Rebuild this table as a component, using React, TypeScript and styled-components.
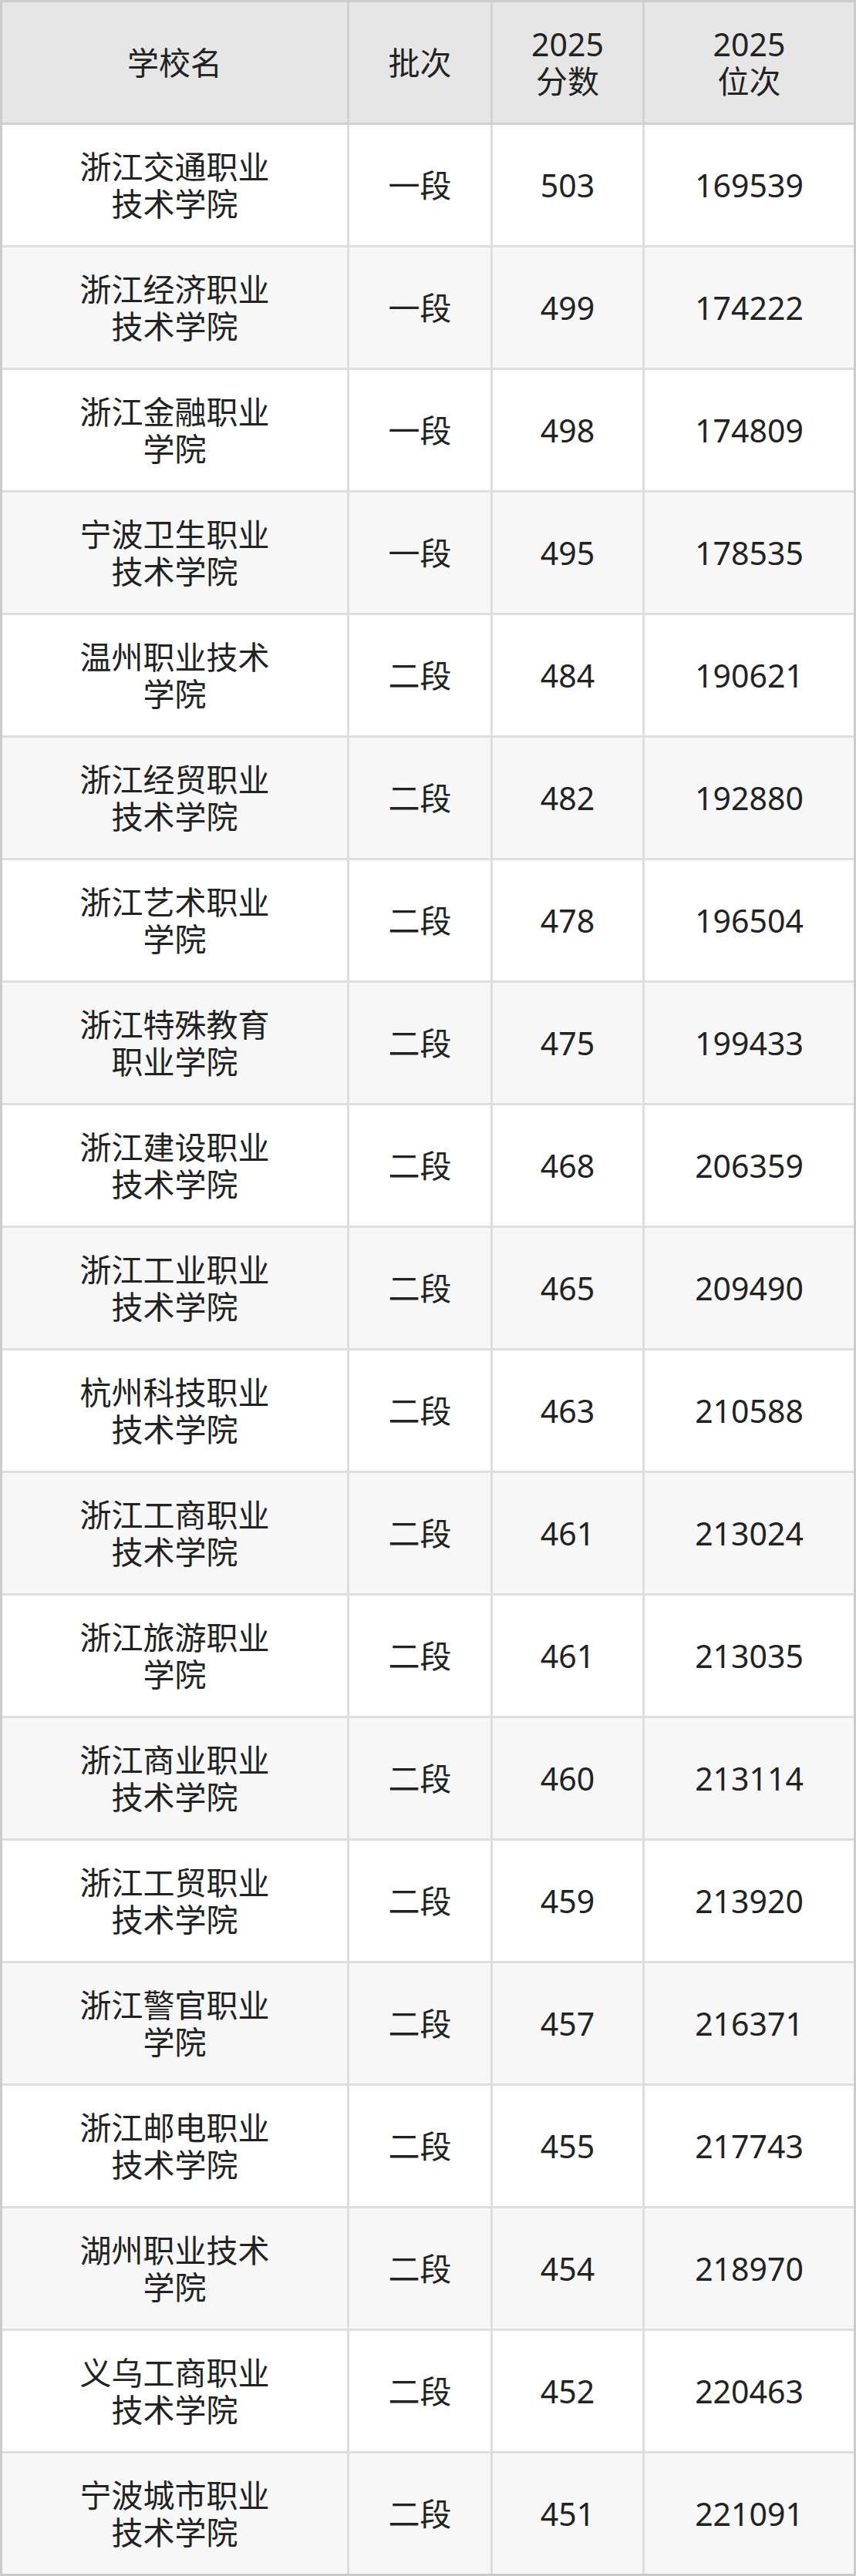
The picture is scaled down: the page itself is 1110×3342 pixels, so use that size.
import styled, { createGlobalStyle } from "styled-components";

const GlobalStyle = createGlobalStyle`
  html, body {
    margin: 0;
    padding: 0;
    background: #ffffff;
  }
`;

const Table = styled.div`
  width: 1110px;
  box-sizing: border-box;
  border: 3px solid #cccccc;
  display: flex;
  flex-direction: column;
  font-family: "Noto Sans", "Noto Sans CJK SC", sans-serif;
  font-size: 41px;
  line-height: 48px;
  color: #222222;
`;

const Row = styled.div<{ $header?: boolean }>`
  display: grid;
  grid-template-columns: 447px 183px 194px 271px;
  column-gap: 3px;
  background: ${(p) => (p.$header ? "#d0d0d0" : "#dedede")};
  border-bottom: 3px solid ${(p) => (p.$header ? "#d0d0d0" : "#dedede")};

  &:last-child {
    border-bottom: none;
  }
`;

const Cell = styled.div<{ $bg: string }>`
  height: 156px;
  display: flex;
  align-items: center;
  justify-content: center;
  text-align: center;
  background: ${(p) => p.$bg};
`;

const Name = styled.span`
  max-width: 260px;
`;

const rows: [string, string, number, number][] = [
  ["浙江交通职业技术学院", "一段", 503, 169539],
  ["浙江经济职业技术学院", "一段", 499, 174222],
  ["浙江金融职业学院", "一段", 498, 174809],
  ["宁波卫生职业技术学院", "一段", 495, 178535],
  ["温州职业技术学院", "二段", 484, 190621],
  ["浙江经贸职业技术学院", "二段", 482, 192880],
  ["浙江艺术职业学院", "二段", 478, 196504],
  ["浙江特殊教育职业学院", "二段", 475, 199433],
  ["浙江建设职业技术学院", "二段", 468, 206359],
  ["浙江工业职业技术学院", "二段", 465, 209490],
  ["杭州科技职业技术学院", "二段", 463, 210588],
  ["浙江工商职业技术学院", "二段", 461, 213024],
  ["浙江旅游职业学院", "二段", 461, 213035],
  ["浙江商业职业技术学院", "二段", 460, 213114],
  ["浙江工贸职业技术学院", "二段", 459, 213920],
  ["浙江警官职业学院", "二段", 457, 216371],
  ["浙江邮电职业技术学院", "二段", 455, 217743],
  ["湖州职业技术学院", "二段", 454, 218970],
  ["义乌工商职业技术学院", "二段", 452, 220463],
  ["宁波城市职业技术学院", "二段", 451, 221091],
];

const HEAD_BG = "#e6e6e6";

const App = () => {
  return (
    <>
      <GlobalStyle />
      <Table>
        <Row $header>
          <Cell $bg={HEAD_BG}>学校名</Cell>
          <Cell $bg={HEAD_BG}>批次</Cell>
          <Cell $bg={HEAD_BG}>
            2025
            <br />
            分数
          </Cell>
          <Cell $bg={HEAD_BG}>
            2025
            <br />
            位次
          </Cell>
        </Row>
        {rows.map(([name, batch, score, rank], i) => {
          const bg = i % 2 === 0 ? "#ffffff" : "#f7f7f7";
          return (
            <Row key={name}>
              <Cell $bg={bg}>
                <Name>{name}</Name>
              </Cell>
              <Cell $bg={bg}>{batch}</Cell>
              <Cell $bg={bg}>{score}</Cell>
              <Cell $bg={bg}>{rank}</Cell>
            </Row>
          );
        })}
      </Table>
    </>
  );
};

export default App;
